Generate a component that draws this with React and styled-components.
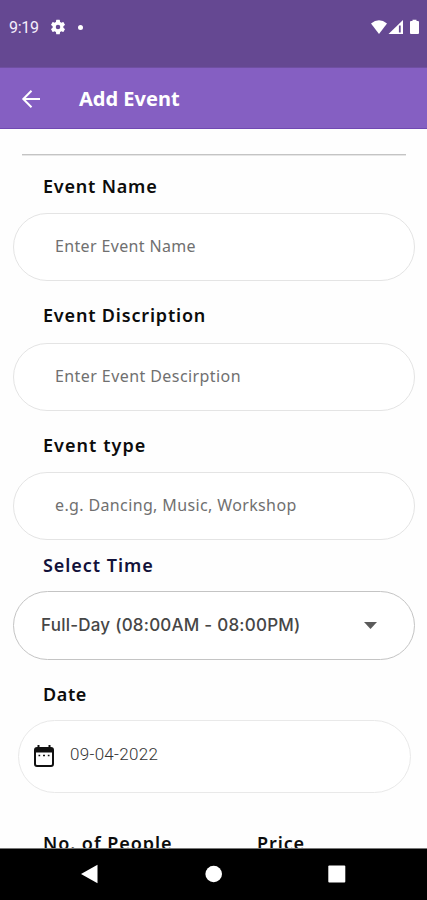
import React from "react";
import styled, { createGlobalStyle } from "styled-components";

const Global = createGlobalStyle`
  * { box-sizing: border-box; }
  body { margin: 0; background: #fff; }
`;

const Screen = styled.div`
  width: 427px;
  height: 900px;
  display: flex;
  flex-direction: column;
  overflow: hidden;
  background: #fefefe;
  font-family: "Noto Sans", sans-serif;
`;

const StatusBar = styled.header`
  flex: none;
  height: 68px;
  padding: 17px 7px 0 9px;
  display: flex;
  align-items: flex-start;
  justify-content: space-between;
  background: #654892;
  border-bottom: 1px solid #6f4fa2;
  color: #f4eefc;
`;

const StatusGroup = styled.div`
  display: flex;
  align-items: center;
  height: 20px;
  gap: ${(p) => p.$gap};
`;

const Clock = styled.span`
  width: 31px;
  font: 400 16px/22px Roboto, sans-serif;
  letter-spacing: -0.3px;
  padding-top: 2px;
`;

const Dot = styled.span`
  width: 5px;
  height: 5px;
  margin-left: 2px;
  border-radius: 50%;
  background: #fff;
`;

const AppBar = styled.div`
  flex: none;
  height: 61px;
  padding: 1px 21px 0;
  display: flex;
  align-items: center;
  gap: 38px;
  background: #855fc2;
  border-bottom: 1px solid #7048b2;
`;

const IconButton = styled.button`
  display: flex;
  padding: 0;
  border: 0;
  background: none;
`;

const Title = styled.h1`
  margin: 0;
  color: #fff;
  font-size: 20px;
  line-height: 26px;
  font-weight: 700;
  letter-spacing: ${(p) => p.$spacing};
`;

const Form = styled.main`
  flex: 1;
  min-height: 0;
  overflow: hidden;
  padding: 25px 12px 0 13px;
`;

const Rule = styled.hr`
  height: 2px;
  margin: 0 9px;
  border: 0;
  background: linear-gradient(#c4c4c4 50%, #e6e6e6 50%);
`;

const Label = styled.label`
  display: block;
  height: 26px;
  margin: ${(p) => p.$margin};
  color: ${(p) => p.$color || "#0c0c0c"};
  font-size: 18px;
  line-height: 26px;
  font-weight: 600;
  white-space: nowrap;
  letter-spacing: ${(p) => p.$spacing};
`;

const Field = styled.input`
  display: block;
  width: 402px;
  height: 68px;
  padding: 0 41px 3px;
  border: 1px solid #e4e4e4;
  border-radius: 34px;
  outline: 0;
  background: #fff;
  font: 400 16px "Noto Sans", sans-serif;
  letter-spacing: ${(p) => p.$spacing};
  &::placeholder { color: #707070; opacity: 1; }
`;

const Select = styled.button`
  width: 402px;
  height: 69px;
  padding: 0 37px 1px 27px;
  display: flex;
  align-items: center;
  justify-content: space-between;
  border: 1px solid #c4c4c4;
  border-radius: 35px;
  background: #fff;
  color: #464646;
  font: 500 17px Inter, sans-serif;
  letter-spacing: ${(p) => p.$spacing};
`;

const DateField = styled.div`
  width: 393px;
  height: 73px;
  margin-left: 5px;
  padding: 0 14px 1px;
  display: flex;
  align-items: center;
  gap: 15px;
  border: 1px solid #e9e9e9;
  border-radius: 37px;
  background: #fff;
  color: #333;
`;

const DateValue = styled.span`
  padding-bottom: 4px;
  font: 300 17px Roboto, sans-serif;
  letter-spacing: 0.3px;
`;

const Columns = styled.div`
  display: grid;
  grid-template-columns: 214px 1fr;
  margin: 37px 0 0 30px;
`;

const NavBar = styled.nav`
  flex: none;
  height: 52px;
  padding: 0 81px 1px 80px;
  display: flex;
  align-items: center;
  justify-content: space-between;
  background: #000;
  border-top: 1px solid #777;
`;

const Gear = () => (
  <svg width="18" height="18" viewBox="0 0 24 24" fill="#fff">
    <path d="M19.14 12.94c.04-.3.06-.61.06-.94s-.02-.64-.07-.94l2.03-1.58a.49.49 0 0 0 .12-.61l-1.92-3.32a.49.49 0 0 0-.59-.22l-2.39.96a7 7 0 0 0-1.62-.94l-.36-2.54A.48.48 0 0 0 13.92 2.4h-3.84a.48.48 0 0 0-.48.41l-.36 2.54c-.59.24-1.13.57-1.62.94l-2.39-.96a.49.49 0 0 0-.59.22L2.72 8.87a.48.48 0 0 0 .12.61l2.03 1.58a6 6 0 0 0 0 1.88l-2.03 1.58a.49.49 0 0 0-.12.61l1.92 3.32c.12.22.37.29.59.22l2.39-.96c.5.38 1.03.7 1.62.94l.36 2.54c.05.24.24.41.48.41h3.84c.24 0 .44-.17.47-.41l.36-2.54c.59-.24 1.13-.56 1.62-.94l2.39.96c.22.08.47 0 .59-.22l1.92-3.32a.48.48 0 0 0-.12-.61zM12 15a3 3 0 1 1 0-6 3 3 0 0 1 0 6z" />
  </svg>
);

const Signals = () => (
  <svg width="50" height="16" viewBox="0 0 50 16" fill="#fff">
    <path d="M1 4.5Q9 -2 17 4.5L9 15Z" />
    <path d="M18.5 15 33 1V15Z" />
    <path d="M29.8 6.5V13.5" stroke="#654892" strokeWidth="1.8" />
    <path d="M40 3Q40 2 41 2H42.5V.7H46.5V2H48Q49 2 49 3V14Q49 15 48 15H41Q40 15 40 14Z" />
  </svg>
);

const BackArrow = () => (
  <svg width="20" height="20" viewBox="0 0 20 20" fill="none" stroke="#fff" strokeWidth="2">
    <path d="M19 10H2.5M10.5 1.8 2.3 10l8.2 8.2" />
  </svg>
);

const Caret = () => (
  <svg width="13" height="7" viewBox="0 0 13 7" fill="#5b5b5b">
    <path d="M0 0H13L6.5 7Z" />
  </svg>
);

const Calendar = () => (
  <svg width="22" height="24" viewBox="0 0 22 24">
    <path d="M5.5 1V5M16.5 1V5" stroke="#111" strokeWidth="2" />
    <rect x="2" y="4" width="18" height="18" rx="2" fill="none" stroke="#111" strokeWidth="2" />
    <path d="M2 4H20V8.5H2Z" fill="#111" />
    <path d="M5.5 11.5H7.2M10 11.5H12M14.8 11.5H16.5" stroke="#111" strokeWidth="1.6" />
  </svg>
);

const BackKey = () => (
  <svg width="18" height="20" viewBox="0 0 18 20" fill="#fff"><path d="M1 10 17.5 .7V19.3Z" /></svg>
);
const HomeKey = () => (
  <svg width="18" height="18" viewBox="0 0 18 18" fill="#fff"><circle cx="9.7" cy="9" r="8.3" /></svg>
);
const RecentKey = () => (
  <svg width="18" height="18" viewBox="0 0 18 18" fill="#fff"><rect x=".3" y=".5" width="17" height="17" rx="1" /></svg>
);

export default function App() {
  return (
    <Screen>
      <Global />
      <StatusBar>
        <StatusGroup $gap="9px">
          <Clock>9:19</Clock>
          <Gear />
          <Dot />
        </StatusGroup>
        <StatusGroup $gap="0"><Signals /></StatusGroup>
      </StatusBar>
      <AppBar>
        <IconButton aria-label="Back"><BackArrow /></IconButton>
        <Title $spacing="0px">Add Event</Title>
      </AppBar>
      <Form>
        <Rule />
        <Label $margin="17px 0 14px 30px" $spacing="0.8px">Event Name</Label>
        <Field $spacing="0.35px" placeholder="Enter Event Name" />
        <Label $margin="21px 0 15px 30px" $spacing="0.82px">Event Discription</Label>
        <Field $spacing="0.42px" placeholder="Enter Event Descirption" />
        <Label $margin="21px 0 14px 30px" $spacing="1.05px">Event type</Label>
        <Field $spacing="0.37px" placeholder="e.g. Dancing, Music, Workshop" />
        <Label $margin="12px 0 13px 30px" $spacing="0.95px" $color="#12123a">Select Time</Label>
        <Select $spacing="0.23px">Full-Day (08:00AM - 08:00PM)<Caret /></Select>
        <Label $margin="21px 0 13px 30px" $spacing="0.6px">Date</Label>
        <DateField><Calendar /><DateValue>09-04-2022</DateValue></DateField>
        <Columns>
          <Label $margin="0" $spacing="0.95px">No. of People</Label>
          <Label $margin="0" $spacing="0.9px">Price</Label>
        </Columns>
      </Form>
      <NavBar>
        <BackKey />
        <HomeKey />
        <RecentKey />
      </NavBar>
    </Screen>
  );
}
